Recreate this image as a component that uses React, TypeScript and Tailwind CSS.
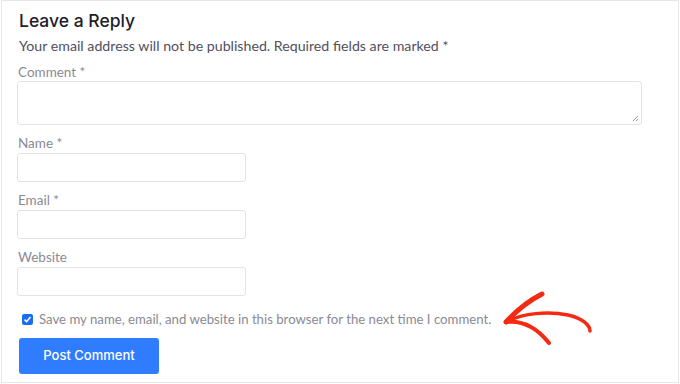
import React from 'react';

// Arrow annotation pointing at the "save my details" checkbox line
const RedArrow = () => (
  <svg className="absolute left-[496px] top-[286px]" width="100" height="64" viewBox="0 0 100 64" fill="none">
    <path d="M8 35 C 20 22, 32 13, 44 7" stroke="#f52a12" strokeWidth="5" strokeLinecap="round" />
    <path d="M8 35 C 25 33, 40 42, 51 56" stroke="#f52a12" strokeWidth="4" strokeLinecap="round" />
    <path d="M8 35 C 25 26, 50 24, 70 28 C 84 31, 92 38, 92 44" stroke="#f52a12" strokeWidth="3.5" strokeLinecap="round" />
  </svg>
);

const Field = ({ label, wide }: { label: string; wide?: boolean }) => (
  <div className="flex flex-col">
    <label className="text-[13.5px] leading-4 text-[#8a8a94] pl-px">{label}</label>
    <div className={`${wide ? 'w-[625px] h-[44px] mt-px' : 'w-[229px] h-[29px] mt-[2px]'} border border-[#e3e3e6] rounded-[3px] bg-white relative`}>
      {wide && (
        <svg className="absolute right-[2px] bottom-[2px]" width="7" height="7" viewBox="0 0 7 7">
          <path d="M1 6 L6 1 M4 6 L6 4" stroke="#9a9a9a" strokeWidth="1" />
        </svg>
      )}
    </div>
  </div>
);

export default function App() {
  return (
    <div className="relative ml-px w-[678px] h-[383px] border border-[#e6e6e8] bg-white" style={{ fontFamily: 'Lato, "Noto Sans", sans-serif' }}>
      <div className="pl-[15px] pt-[10px] flex flex-col">
        <h3 className="text-[17.5px] leading-5 font-medium text-[#1d1d2b] pl-[2px]" style={{ fontFamily: 'Inter, sans-serif' }}>Leave a Reply</h3>
        <p className="mt-[5px] text-[14.2px] leading-5 text-[#50505e] pl-[2px]">
          Your email address will not be published. Required fields are marked *
        </p>
        <div className="mt-[8px] flex flex-col gap-[10px]">
          <Field label="Comment *" wide />
          <Field label="Name *" />
          <Field label="Email *" />
          <Field label="Website" />
        </div>
        <div className="mt-[13px] flex items-center gap-[6px] pl-[5px]">
          <span className="w-[11px] h-[11px] rounded-[2px] bg-[#1a6cf0] flex items-center justify-center">
            <svg width="9" height="9" viewBox="0 0 9 9"><path d="M1.5 4.7 L3.6 6.7 L7.5 2" stroke="white" strokeWidth="1.6" fill="none" /></svg>
          </span>
          <span className="text-[13.2px] leading-5 text-[#8a8a94]">Save my name, email, and website in this browser for the next time I comment.</span>
        </div>
        <button className="mt-[9px] w-[140px] h-[36px] rounded-[3px] bg-[#2f7cff] text-white text-[13px] font-medium ml-[2px]" style={{ fontFamily: 'Inter, sans-serif' }}>
          Post Comment
        </button>
      </div>
      <RedArrow />
    </div>
  );
}
